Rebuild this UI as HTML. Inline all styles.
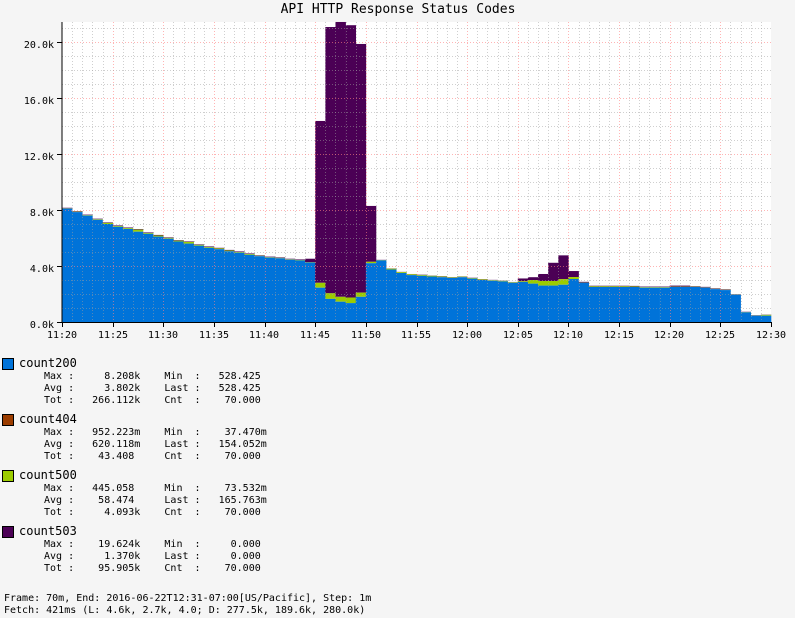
<!DOCTYPE html>
<html><head><meta charset="utf-8"><style>
html,body{margin:0;padding:0;background:#f5f5f5;}
body{width:795px;height:618px;position:relative;overflow:hidden;font-family:"DejaVu Sans Mono","Liberation Mono",monospace;color:#000;}
.t{position:absolute;white-space:pre;font-size:10px;line-height:12px;}
.sw{position:absolute;width:10px;height:10px;border:1px solid #000;left:2px;}
.nm{position:absolute;left:19px;font-size:12px;line-height:14px;white-space:pre;}
</style></head><body>
<svg id="g" width="795" height="340" style="position:absolute;left:0;top:0" xmlns="http://www.w3.org/2000/svg">
<rect x="62" y="22" width="709" height="300" fill="#fff"/>
<g id="bars"></g>
<g id="grid"></g>
<line x1="62" y1="22" x2="62" y2="323" stroke="#000"/>
<line x1="62" y1="322.5" x2="771" y2="322.5" stroke="#000"/>
<g id="ticks" stroke="#000"></g>
<text x="398" y="13" font-size="13" text-anchor="middle" font-family="DejaVu Sans Mono,Liberation Mono,monospace">API HTTP Response Status Codes</text>
<g font-size="10" font-family="DejaVu Sans Mono,Liberation Mono,monospace" text-anchor="end">
<text x="54" y="48">20.0k</text><text x="54" y="104">16.0k</text><text x="54" y="160">12.0k</text>
<text x="54" y="216">8.0k</text><text x="54" y="272">4.0k</text><text x="54" y="328">0.0k</text>
</g>
<g font-size="10" font-family="DejaVu Sans Mono,Liberation Mono,monospace" text-anchor="middle">
<text x="62" y="338">11:20</text><text x="113" y="338">11:25</text><text x="163" y="338">11:30</text>
<text x="214" y="338">11:35</text><text x="264" y="338">11:40</text><text x="315" y="338">11:45</text>
<text x="366" y="338">11:50</text><text x="416" y="338">11:55</text><text x="467" y="338">12:00</text>
<text x="518" y="338">12:05</text><text x="568" y="338">12:10</text><text x="619" y="338">12:15</text>
<text x="669" y="338">12:20</text><text x="720" y="338">12:25</text><text x="771" y="338">12:30</text>
</g>
</svg>

<div class="sw" style="top:358px;background:#0073d9"></div><div class="nm" style="top:356px">count200</div>
<div class="t" style="left:44px;top:371px">Max :     8.208k    Min  :   528.425
Avg :     3.802k    Last :   528.425
Tot :   266.112k    Cnt  :    70.000</div>

<div class="sw" style="top:414px;background:#9c3d00"></div><div class="nm" style="top:412px">count404</div>
<div class="t" style="left:44px;top:427px">Max :   952.223m    Min  :    37.470m
Avg :   620.118m    Last :   154.052m
Tot :    43.408     Cnt  :    70.000</div>

<div class="sw" style="top:470px;background:#9ccc00"></div><div class="nm" style="top:468px">count500</div>
<div class="t" style="left:44px;top:483px">Max :   445.058     Min  :    73.532m
Avg :    58.474     Last :   165.763m
Tot :     4.093k    Cnt  :    70.000</div>

<div class="sw" style="top:526px;background:#4b0055"></div><div class="nm" style="top:524px">count503</div>
<div class="t" style="left:44px;top:539px">Max :    19.624k    Min  :     0.000
Avg :     1.370k    Last :     0.000
Tot :    95.905k    Cnt  :    70.000</div>

<div class="t" style="left:4px;top:593px">Frame: 70m, End: 2016-06-22T12:31-07:00[US/Pacific], Step: 1m
Fetch: 421ms (L: 4.6k, 2.7k, 4.0; D: 277.5k, 189.6k, 280.0k)</div>

<script>
var blue=[8.1,7.85,7.6,7.3,7.0,6.8,6.65,6.45,6.3,6.1,5.95,5.75,5.6,5.45,5.3,5.2,5.05,4.95,4.8,4.7,4.6,4.55,4.45,4.4,4.25,2.45,1.65,1.45,1.35,1.8,4.2,4.4,3.75,3.5,3.35,3.3,3.25,3.2,3.15,3.2,3.1,3.0,2.95,2.9,2.8,2.86,2.74,2.6,2.6,2.66,3.07,2.8,2.5,2.5,2.5,2.5,2.5,2.45,2.45,2.45,2.5,2.5,2.5,2.45,2.35,2.28,1.95,0.69,0.45,0.45];
var green=[0.02,0.03,0.03,0.04,0.08,0.06,0.06,0.15,0.06,0.08,0.06,0.06,0.12,0.06,0.06,0.06,0.06,0.05,0.06,0.03,0.03,0.03,0.03,0.03,0.02,0.35,0.4,0.35,0.4,0.3,0.1,0.02,0.06,0.06,0.06,0.06,0.05,0.05,0.04,0.04,0.04,0.04,0.04,0.04,0.04,0.05,0.26,0.33,0.33,0.4,0.14,0.02,0.05,0.05,0.05,0.05,0.04,0.04,0.04,0.04,0.02,0.02,0.02,0.02,0.02,0.02,0.02,0.02,0.02,0.06];
var purpleTop={25:14.36,26:21.07,27:21.43,28:21.2,29:19.86,30:8.29,45:3.11,46:3.2,47:3.43,48:4.23,49:4.76,50:3.64};
var svg="http://www.w3.org/2000/svg",B=document.getElementById('bars'),G=document.getElementById('grid'),T=document.getElementById('ticks');
var x0=62,w=709/70,k=14,y0=322;
function r(x,y,ww,h,c){var e=document.createElementNS(svg,'rect');e.setAttribute('x',x);e.setAttribute('y',y);e.setAttribute('width',ww);e.setAttribute('height',h);e.setAttribute('fill',c);B.appendChild(e);}
for(var i=0;i<70;i++){
 var x=x0+i*w,b=blue[i],g=green[i],s=b+g;
 var p=purpleTop[i]!==undefined?purpleTop[i]:s+(i<25?0.04:(i>50&&i<66?0.04:0.02));
 if(i==24)p=s+0.25;
 if(i==51)p=s+0.05;
 if(i==60||i==61)p=s+0.08;
 r(x,y0-p*k,w+0.3,(p-s)*k,'#4b0055');
 r(x,y0-s*k,w+0.3,g*k,'#9ccc00');
 r(x,y0-b*k,w+0.3,b*k,'#0073d9');
}
function ln(x1,y1,x2,y2,c,par){var e=document.createElementNS(svg,'line');e.setAttribute('x1',x1);e.setAttribute('y1',y1);e.setAttribute('x2',x2);e.setAttribute('y2',y2);e.setAttribute('stroke',c);if(par===G){e.setAttribute('stroke-dasharray','1,2');}(par||G).appendChild(e);}
for(var m=1;m<70;m++){var xx=Math.round(x0+m*w)+0.5;ln(xx,22,xx,322,m%5==0?'rgba(255,130,130,0.6)':'rgba(160,160,160,0.5)',G);}
for(var v=1;v<=21;v++){var yy=Math.round(y0-v*k)+0.5;ln(62,yy,771,yy,v%4==0?'rgba(255,130,130,0.6)':'rgba(160,160,160,0.5)',G);}
for(var v=0;v<=20;v+=4){var yy=Math.round(y0-v*k)+0.5;ln(57,yy,62,yy,'#000',T);}
for(var m=0;m<=70;m+=5){var xx=Math.round(x0+m*w)+0.5;ln(xx,322,xx,327,'#000',T);}
</script>
</body></html>
